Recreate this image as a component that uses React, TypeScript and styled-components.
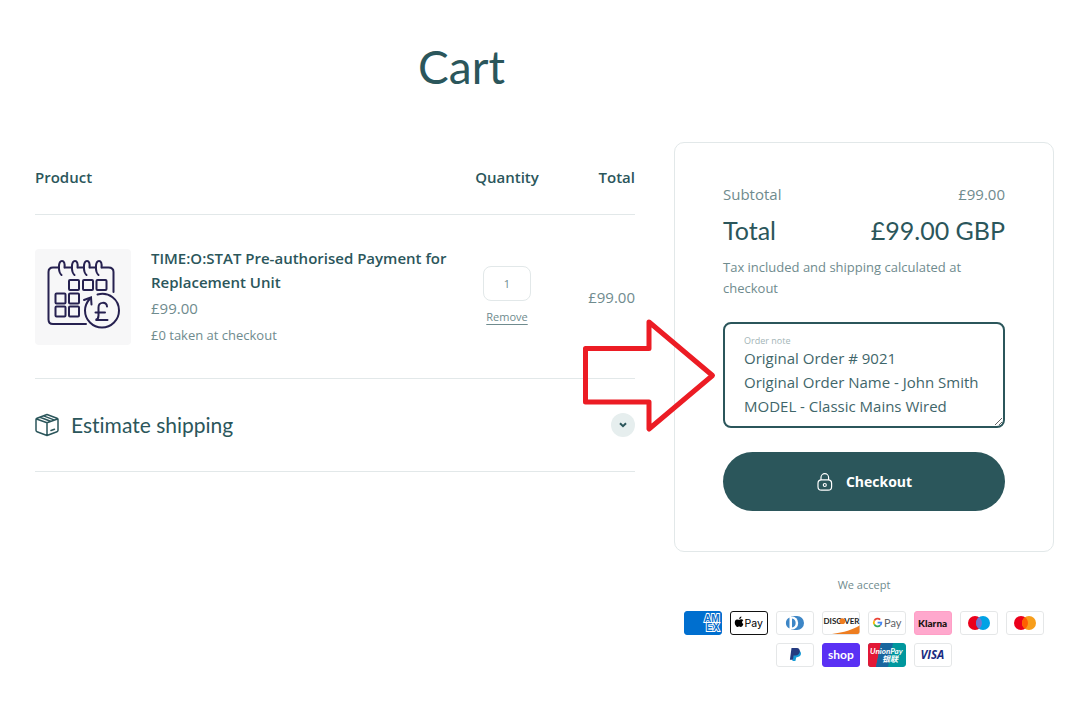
import React, { useState } from 'react';
import styled, { createGlobalStyle } from 'styled-components';

const ink = '#2b565b';
const muted = '#6f8b8e';
const line = '#e2e8e9';
const heading = 'Lato, "Liberation Sans", sans-serif';
const body = '"Open Sans", "Liberation Sans", sans-serif';

const GlobalStyle = createGlobalStyle`
  * { box-sizing: border-box; }
  body { margin: 0; background: #fff; color: ${muted}; font: 15px/24px ${body}; font-variant-ligatures: none; }
  button, input, textarea { font: inherit; color: inherit; }
`;

const Page = styled.main`
  padding: 39px 34px 48px 35px;
`;

const Title = styled.h1`
  margin: 0 0 47px;
  padding-right: 166px;
  text-align: center;
  font: 400 46px/56px ${heading};
  color: ${ink};
`;

const Columns = styled.div`
  display: grid;
  grid-template-columns: minmax(0, 1fr) 380px;
  gap: 39px;
  align-items: start;
`;

const CartTable = styled.table`
  width: 100%;
  border-collapse: separate;
  border-spacing: 0;
  table-layout: fixed;
`;

const HeadCell = styled.th<{ $align?: string; $width?: string }>`
  height: 73px;
  padding: 0 0 2px;
  width: ${(p) => p.$width ?? 'auto'};
  text-align: ${(p) => p.$align ?? 'left'};
  border-bottom: 1px solid ${line};
  font-weight: 600;
  color: ${ink};
`;

const Cell = styled.td<{ $align?: string }>`
  padding: 31px 0;
  text-align: ${(p) => p.$align ?? 'left'};
  vertical-align: middle;
  border-bottom: 1px solid ${line};
`;

const Item = styled.div`
  display: flex;
  align-items: center;
  gap: 20px;
`;

const Thumb = styled.div`
  flex: none;
  width: 96px;
  height: 96px;
  border-radius: 4px;
  background: #f7f7f8;
`;

const ItemName = styled.a`
  display: block;
  font-weight: 600;
  color: ${ink};
  text-decoration: none;
`;

const ItemPrice = styled.p`
  margin: 2px 0 0;
`;

const Small = styled.p`
  margin: 3px 0 0;
  font-size: 13px;
`;

const Quantity = styled.div`
  display: flex;
  flex-direction: column;
  align-items: center;
  gap: 8px;
  padding-bottom: 2px;
`;

const QuantityInput = styled.input`
  width: 48px;
  height: 35px;
  padding: 0;
  border: 1px solid ${line};
  border-radius: 8px;
  background: #fff;
  text-align: center;
  font-size: 11px;
  appearance: textfield;
  &::-webkit-inner-spin-button { appearance: none; margin: 0; }
`;

const Remove = styled.a`
  font-size: 11px;
  line-height: 16px;
  color: inherit;
  text-decoration: underline;
  text-underline-offset: 3px;
`;

const Estimate = styled.button`
  display: flex;
  align-items: center;
  gap: 12px;
  width: 100%;
  height: 93px;
  padding: 0;
  border: 0;
  border-bottom: 1px solid ${line};
  background: none;
  text-align: left;
  font: 400 21px/28px ${heading};
  font-variant-ligatures: none;
  color: ${ink};
`;

const EstimateLabel = styled.span`
  flex: 1;
`;

const Chevron = styled.span`
  display: grid;
  place-items: center;
  width: 24px;
  height: 24px;
  border-radius: 50%;
  background: #e6eeee;
`;

const Aside = styled.aside`
  position: relative;
`;

const Summary = styled.form`
  padding: 39px 48px 40px;
  border: 1px solid ${line};
  border-radius: 10px;
`;

const SummaryRow = styled.div`
  display: flex;
  justify-content: space-between;
`;

const TotalRow = styled(SummaryRow)`
  margin: 8px 0 11px;
  font: 400 25px/32px ${heading};
  color: ${ink};
`;

const TaxNote = styled.p`
  margin: 0 0 23px;
  font-size: 13px;
  line-height: 21px;
`;

const Note = styled.div`
  position: relative;
  display: flex;
`;

const NoteLabel = styled.label`
  position: absolute;
  top: 12px;
  left: 21px;
  font-size: 9px;
  line-height: 14px;
  color: #a3b5b7;
`;

const NoteInput = styled.textarea`
  width: 100%;
  height: 106px;
  padding: 22px 18px 8px 19px;
  border: 2px solid ${ink};
  border-radius: 8px;
  outline: 0;
  resize: vertical;
  overflow: hidden;
  color: #3f666a;
`;

const Checkout = styled.button`
  display: flex;
  align-items: center;
  justify-content: center;
  gap: 12px;
  width: 100%;
  height: 59px;
  margin-top: 24px;
  border: 0;
  border-radius: 30px;
  background: ${ink};
  color: #fff;
  font-size: 14px;
  font-weight: 700;
`;

const Accept = styled.p`
  margin: 25px 0 18px;
  text-align: center;
  font-size: 11px;
  line-height: 16px;
`;

const Payments = styled.ul`
  display: flex;
  flex-wrap: wrap;
  justify-content: center;
  gap: 8px;
  margin: 0;
  padding: 0;
  list-style: none;
`;

const Payment = styled.li`
  display: flex;
  width: 38px;
  height: 24px;
`;

const Pointer = styled.svg`
  position: absolute;
  top: 170px;
  left: -94px;
  pointer-events: none;
`;

function CalendarArt() {
  return (
    <svg width="96" height="96" viewBox="0 0 96 96" fill="none" stroke="#262150" strokeWidth="2" strokeLinecap="round">
      <path d="M51 75H18Q13.500 75 13.500 70.500V23Q13.500 18.500 18 18.500H24M30 18.500H37M43 18.500H49M55 18.500H61M67 18.500H73.500Q78.500 18.500 78.500 23V43" />
      {[24, 37, 49, 61].map((x) => (
        <path key={x} d={`M${x + 5.500} 18.500C${x + 6} 14 ${x + 5} 12 ${x + 3} 12C${x - 1} 12 ${x - 1} 23 ${x + 2.500} 26`} />
      ))}
      {[[34, 31], [48, 31], [61.500, 31], [20.500, 44.500], [34, 44.500], [20.500, 57.500], [34, 57.500]].map(([x, y]) => (
        <rect key={`${x}-${y}`} x={x} y={y} width="10" height="10" rx="1" />
      ))}
      <path d="M62.500 45.500C74 42.500 84 50.500 84 61.500a17 17 0 0 1-34 0c0-4.500 1.500-8 5-12" />
      <path d="M49 51l7-2.500.500 7" />
      <path d="M72 57.500c-.5-5-8.500-5-8.500 1v8c0 2-1 4-3 4.500h12M60.500 63.500h9.500" />
    </svg>
  );
}

function BoxIcon() {
  return (
    <svg width="24" height="24" viewBox="0 0 24 24" fill="none" stroke={ink} strokeWidth="1.5" strokeLinecap="round" strokeLinejoin="round">
      <path d="M12 1.500 22 5.200Q23 5.600 23 6.500V17.300Q23 18.300 22 18.700L12 22.500 2 18.700Q1 18.300 1 17.300V6.500Q1 5.600 2 5.200ZM1.500 6 12 9.800 22.500 6M12 9.800V22.500M5 4.200 15.500 8.200M8.500 2.900 19 6.900M16 17.500 19.500 16.200" />
    </svg>
  );
}

function LockIcon() {
  return (
    <svg width="18" height="20" viewBox="0 0 18 20" fill="none" stroke="#fff" strokeWidth="1.200">
      <path d="M5 8V5.500a3.800 3.800 0 0 1 7.600 0V8" />
      <rect x="2" y="7.800" width="13.600" height="10.400" rx="3.500" />
      <circle cx="8.800" cy="13" r="1.500" />
    </svg>
  );
}

type MarkProps = { name: string; fill?: string; edge?: string; children: React.ReactNode };

function Mark({ name, fill = '#fff', edge = '#e5e7e8', children }: MarkProps) {
  return (
    <Payment>
      <svg width="38" height="24" viewBox="0 0 38 24" role="img" aria-label={name}>
        <rect x=".5" y=".5" width="37" height="23" rx="2.500" fill={fill} stroke={edge} />
        {children}
      </svg>
    </Payment>
  );
}

function PaymentMarks() {
  return (
    <Payments>
      <Mark name="American Express" fill="#006fcf" edge="#006fcf">
        <g fontFamily="Liberation Sans" fontWeight="700" fontSize="10" fill="#0a6fcb" stroke="#fff" strokeWidth="1.800" paintOrder="stroke">
          <text x="20" y="11">AM</text>
          <text x="22" y="20">EX</text>
        </g>
      </Mark>
      <Mark name="Apple Pay" edge="#111">
        <path d="M11.400 8.300c-1 0-1.500.5-2.200.5S7.700 8.300 7 8.400c-2.600.3-2.800 4-1.100 6.400 1 1.400 1.500 1.200 2.300.9s1.300-.3 2 0c.9.400 1.600.3 2.500-1.200l.7-1.400c-1.700-.8-1.800-2.900-.1-3.900-.5-.6-1.100-.9-1.900-.9ZM9.200 8c0-1.400.9-2.300 2.200-2.500C11.500 6.900 10.500 8 9.200 8Z" />
        <text x="14.500" y="15.500" fontFamily="Inter" fontSize="10.500">Pay</text>
      </Mark>
      <Mark name="Diners Club">
        <path d="M15 5h6a7 7 0 0 1 0 14h-6Z" fill="#3d86c6" />
        <circle cx="15.500" cy="12" r="6.700" fill="#fff" />
        <path d="M13.500 6.500a6 6 0 0 0 0 11ZM16 7.500a4.600 4.600 0 0 1 0 9Z" fill="#3d86c6" />
      </Mark>
      <Mark name="Discover">
        <path d="M10 23C22 21.500 31 18.500 37.500 14.500V21Q37.500 23 35.500 23Z" fill="#ee7d20" />
        <g fontFamily="Lato" fontWeight="700" fontSize="8" fill="#1c1c1c">
          <text x="1.500" y="13">DISC</text>
          <text x="22.200" y="13">VER</text>
        </g>
        <circle cx="20.300" cy="10.200" r="2.900" fill="#ee7d20" />
      </Mark>
      <Mark name="Google Pay">
        <g fill="none" strokeWidth="1.700">
          <path d="M12.200 8.700A3.700 3.700 0 0 0 6.300 9.700" stroke="#ea4335" />
          <path d="M6.300 9.700a3.700 3.700 0 0 0 0 3.700" stroke="#fbbc04" />
          <path d="M6.300 13.400a3.700 3.700 0 0 0 5.900 1" stroke="#34a853" />
          <path d="M12.200 14.400a3.700 3.700 0 0 0 1.200-2.800H9.600" stroke="#4285f4" />
        </g>
        <text x="16" y="15.500" fontFamily="Lato" fontSize="11" fill="#5f6368">Pay</text>
      </Mark>
      <Mark name="Klarna" fill="#ffa8cd" edge="#ff9fc6">
        <text x="4" y="16" fontFamily="Lato" fontWeight="900" fontSize="10" fill="#17120f">Klarna</text>
      </Mark>
      <Mark name="Maestro">
        <circle cx="15" cy="12" r="7" fill="#eb001b" />
        <circle cx="23" cy="12" r="7" fill="#00a2e5" />
        <path d="M19 6.300a7 7 0 0 1 0 11.400 7 7 0 0 1 0-11.400Z" fill="#7375cf" />
      </Mark>
      <Mark name="Mastercard">
        <circle cx="15" cy="12" r="7" fill="#eb001b" />
        <circle cx="23" cy="12" r="7" fill="#f79e1b" />
        <path d="M19 6.300a7 7 0 0 1 0 11.400 7 7 0 0 1 0-11.400Z" fill="#ff5f00" />
      </Mark>
      <Mark name="PayPal">
        <path d="M18 8h5.500c2.500 1.200 2 5.800-2.500 6.200l-.8.300-.8 3.500h-3Z" fill="#179bd7" />
        <path d="M15.500 5h5.500c4 0 4.200 7.300-1.800 7.600h-1.500l-.8 4.100h-3Z" fill="#253b80" />
      </Mark>
      <Mark name="Shop Pay" fill="#5a31f4" edge="#5a31f4">
        <text x="6" y="15.500" fontFamily="Lato" fontWeight="700" fontSize="12" fill="#fff">shop</text>
      </Mark>
      <Mark name="UnionPay" fill="#00979d" edge="#00979d">
        <path d="M3 0H13L8 24H3Q0 24 0 21V3Q0 0 3 0Z" fill="#e21836" />
        <path d="M13 0H25L20 24H8Z" fill="#19669e" />
        <text x="2" y="10.500" fontFamily="Lato" fontWeight="700" fontStyle="italic" fontSize="8" fill="#fff">UnionPay</text>
        <text x="14" y="19" fontFamily="Noto Sans CJK SC" fontWeight="700" fontStyle="italic" fontSize="8" fill="#fff">银联</text>
      </Mark>
      <Mark name="Visa">
        <text x="6.500" y="16" fontFamily="Open Sans" fontWeight="700" fontStyle="italic" fontSize="11.500" fill="#1a2b80">VISA</text>
      </Mark>
    </Payments>
  );
}

export default function App() {
  const [open, setOpen] = useState(false);
  return (
    <Page>
      <GlobalStyle />
      <Title>Cart</Title>
      <Columns>
        <section>
          <CartTable>
            <thead>
              <tr>
                <HeadCell scope="col">Product</HeadCell>
                <HeadCell scope="col" $align="center" $width="96px">Quantity</HeadCell>
                <HeadCell scope="col" $align="right" $width="80px">Total</HeadCell>
              </tr>
            </thead>
            <tbody>
              <tr>
                <Cell>
                  <Item>
                    <Thumb><CalendarArt /></Thumb>
                    <div>
                      <ItemName href="#product">TIME:O:STAT Pre-authorised Payment for Replacement Unit</ItemName>
                      <ItemPrice>£99.00</ItemPrice>
                      <Small>£0 taken at checkout</Small>
                    </div>
                  </Item>
                </Cell>
                <Cell $align="center">
                  <Quantity>
                    <QuantityInput type="number" defaultValue={1} aria-label="Quantity" />
                    <Remove href="#remove">Remove</Remove>
                  </Quantity>
                </Cell>
                <Cell $align="right">£99.00</Cell>
              </tr>
            </tbody>
          </CartTable>
          <Estimate type="button" aria-expanded={open} onClick={() => setOpen(!open)}>
            <BoxIcon />
            <EstimateLabel>Estimate shipping</EstimateLabel>
            <Chevron>
              <svg width="8" height="6" viewBox="0 0 8 6" fill="none" stroke={ink} strokeWidth="2">
                <path d="M1 1.200 4 4.200 7 1.200" />
              </svg>
            </Chevron>
          </Estimate>
        </section>
        <Aside>
          <Summary onSubmit={(e) => e.preventDefault()}>
            <SummaryRow><span>Subtotal</span><span>£99.00</span></SummaryRow>
            <TotalRow><span>Total</span><span>£99.00 GBP</span></TotalRow>
            <TaxNote>Tax included and shipping calculated at checkout</TaxNote>
            <Note>
              <NoteInput
                id="note"
                spellCheck={false}
                defaultValue={'Original Order # 9021\nOriginal Order Name - John Smith\nMODEL - Classic Mains Wired'}
              />
              <NoteLabel htmlFor="note">Order note</NoteLabel>
            </Note>
            <Checkout type="submit"><LockIcon />Checkout</Checkout>
          </Summary>
          <Accept>We accept</Accept>
          <PaymentMarks />
          <Pointer width="140" height="124" viewBox="0 0 140 124" fill="none" stroke="#ec1c24" strokeWidth="5" strokeLinejoin="round" aria-hidden="true">
            <path d="M5.500 36.500H69V10L132.500 63.500 69 117V90H5.500Z" />
          </Pointer>
        </Aside>
      </Columns>
    </Page>
  );
}
